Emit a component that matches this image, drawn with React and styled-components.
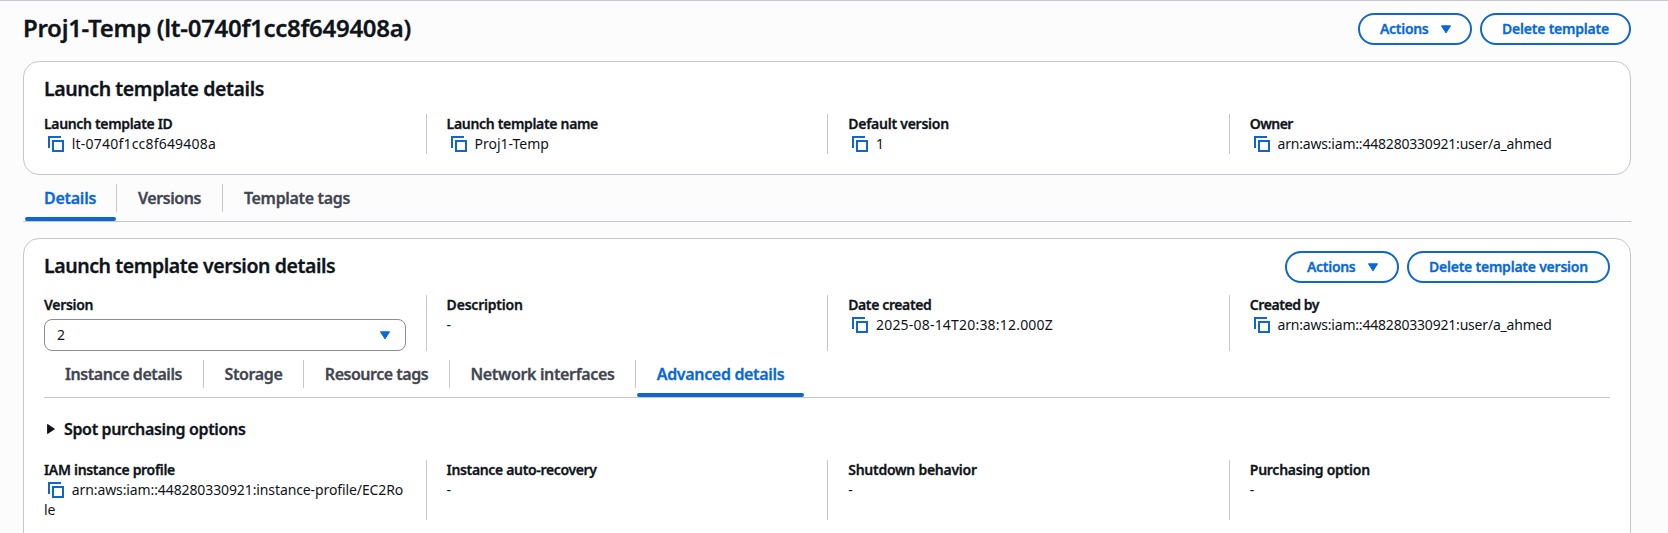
import React from "react";
import styled, { createGlobalStyle, css, ThemeProvider } from "styled-components";

const theme = {
  blue: "#0869d6",
  blueBar: "#0f67cc",
  text: "#0f141a",
  muted: "#424650",
  line: "#c6c6cd",
  page: "#fcfcfd",
};

const strong = css`
  font-weight: 600;
  -webkit-text-stroke: 0.3px currentColor;
`;

const GlobalStyle = createGlobalStyle`
  *, *::before, *::after { box-sizing: border-box; }
  body {
    margin: 0;
    overflow: hidden;
    background: ${theme.page};
    color: ${theme.text};
    font: 14px/20px "Noto Sans", "Open Sans", sans-serif;
  }
`;

const Page = styled.main`
  height: 533px;
  overflow: hidden;
  border-top: 1px solid ${(p) => p.theme.line};
  padding: 12px 37px 0 23px;
`;

const Header = styled.header`
  display: flex;
  justify-content: space-between;
  align-items: flex-start;
  height: 32px;
`;

const PageTitle = styled.h1`
  margin: 0;
  font-size: 24px;
  line-height: 30px;
  ${strong}
  letter-spacing: -0.29px;
`;

const SectionTitle = styled.h2`
  margin: 0;
  padding-top: ${(p) => p.$top || 0}px;
  font-size: 19.5px;
  line-height: 24px;
  ${strong}
  letter-spacing: ${(p) => p.$track}px;
`;

const Actions = styled.div`
  display: flex;
  gap: 8px;
`;

const Button = styled.button`
  display: flex;
  align-items: center;
  justify-content: space-between;
  width: ${(p) => p.$width}px;
  height: 32px;
  padding: 0 19px 0 20px;
  border: 2px solid ${(p) => p.theme.blueBar};
  border-radius: 16px;
  background: #fff;
  color: ${(p) => p.theme.blue};
  font: inherit;
  ${strong}
  letter-spacing: ${(p) => p.$track}px;
  white-space: nowrap;
`;

const Panel = styled.section`
  margin-top: 16px;
  padding: ${(p) => p.$top}px 20px 20px;
  border: 1px solid ${(p) => p.theme.line};
  border-radius: 16px;
  background: #fff;
`;

const VersionPanel = styled(Panel)`
  height: 340px;
`;

const Columns = styled.div`
  display: grid;
  grid-template-columns: repeat(4, 401.6px);
  height: ${(p) => p.$height}px;
  margin: ${(p) => p.$gap}px -20px 0;
`;

const Cell = styled.div`
  padding: 0 20px;
  white-space: nowrap;

  & + & {
    border-left: 1px solid ${(p) => p.theme.line};
  }
`;

const Label = styled.div`
  ${strong}
  letter-spacing: ${(p) => p.$track}px;
`;

const Value = styled.div`
  letter-spacing: ${(p) => p.$track || 0}px;
`;

const CopySvg = styled.svg`
  width: 16px;
  height: 16px;
  margin: 0 7.8px 0 4px;
  vertical-align: -3px;
`;

const Select = styled.div`
  display: flex;
  align-items: center;
  justify-content: space-between;
  width: 362px;
  height: 32px;
  margin-top: 4px;
  padding: 0 15px 0 12px;
  border: 1px solid #8c8c94;
  border-radius: 8px;
  background: #fff;
  color: ${(p) => p.theme.text};
`;

const TabBar = styled.nav`
  display: flex;
  height: 47px;
  padding: 9px 0 0 ${(p) => p.$inset || 0}px;
  border-bottom: 1px solid ${(p) => p.theme.line};
`;

const Tab = styled.div`
  position: relative;
  width: ${(p) => p.$width}px;
  height: 28px;
  line-height: 28px;
  text-align: center;
  font-size: 16px;
  ${strong}
  letter-spacing: ${(p) => p.$track}px;
  color: ${(p) => (p.$active ? p.theme.blue : p.theme.muted)};

  &:not(:last-child) {
    border-right: 1px solid ${(p) => p.theme.line};
  }

  &::after {
    content: "";
    display: ${(p) => (p.$active ? "block" : "none")};
    position: absolute;
    left: 1px;
    right: ${(p) => p.$barEnd || 0}px;
    bottom: -9px;
    height: 4px;
    border-radius: 2px;
    background: ${(p) => p.theme.blueBar};
  }
`;

const Expander = styled.div`
  display: flex;
  align-items: center;
  gap: 9px;
  margin-top: 21px;
  padding-left: 3px;
  font-size: 16px;
  ${strong}
  letter-spacing: -0.35px;
`;

const CopyIcon = () => (
  <CopySvg viewBox="0 0 16 16" fill="none" stroke={theme.blueBar} strokeWidth="2">
    <path d="M1 12V1H13" />
    <rect x="5" y="5" width="10" height="10" />
  </CopySvg>
);

const CaretDown = () => (
  <svg width="10" height="9" viewBox="0 0 10 9" fill={theme.blue} stroke={theme.blue} strokeLinejoin="round">
    <path d="M.5 .8h9L5 7.9z" />
  </svg>
);

const CaretRight = () => (
  <svg width="8" height="12" viewBox="0 0 8 12" fill={theme.text} stroke={theme.text} strokeLinejoin="round">
    <path d="M.6 1.5v9L7.4 6z" />
  </svg>
);

const Field = ({ label, track, value, valueTrack, copy, children }) => (
  <Cell>
    <Label $track={track}>{label}</Label>
    {children || (
      <Value $track={valueTrack}>
        {copy && <CopyIcon />}
        {value}
      </Value>
    )}
  </Cell>
);

const Tabs = ({ items, inset }) => (
  <TabBar $inset={inset}>
    {items.map((t) => (
      <Tab key={t.name} $width={t.width} $track={t.track} $active={t.active} $barEnd={t.barEnd}>
        {t.name}
      </Tab>
    ))}
  </TabBar>
);

const mainTabs = [
  { name: "Details", width: 93, track: -0.25, active: true },
  { name: "Versions", width: 106, track: -0.43 },
  { name: "Template tags", width: 148, track: -0.33 },
];

const versionTabs = [
  { name: "Instance details", width: 160, track: -0.42 },
  { name: "Storage", width: 100, track: -0.37 },
  { name: "Resource tags", width: 146, track: -0.48 },
  { name: "Network interfaces", width: 186, track: -0.35 },
  { name: "Advanced details", width: 169, track: -0.33, active: true, barEnd: 1 },
];

export default function App() {
  return (
    <ThemeProvider theme={theme}>
      <GlobalStyle />
      <Page>
        <Header>
          <PageTitle>Proj1-Temp (lt-0740f1cc8f649408a)</PageTitle>
          <Actions>
            <Button $width={114} $track={-0.3}>
              Actions <CaretDown />
            </Button>
            <Button $width={151} $track={-0.21}>Delete template</Button>
          </Actions>
        </Header>

        <Panel $top={15}>
          <SectionTitle $track={-0.41}>Launch template details</SectionTitle>
          <Columns $height={40} $gap={13}>
            <Field label="Launch template ID" track={-0.335} value="lt-0740f1cc8f649408a" valueTrack={0.2} copy />
            <Field label="Launch template name" track={-0.32} value="Proj1-Temp" valueTrack={0.02} copy />
            <Field label="Default version" track={-0.25} value="1" copy />
            <Field label="Owner" track={-0.55} value="arn:aws:iam::448280330921:user/a_ahmed" valueTrack={-0.2} copy />
          </Columns>
        </Panel>

        <Tabs items={mainTabs} inset={1} />

        <VersionPanel $top={12}>
          <Header>
            <SectionTitle $top={3} $track={-0.43}>Launch template version details</SectionTitle>
            <Actions>
              <Button $width={114} $track={-0.3}>
                Actions <CaretDown />
              </Button>
              <Button $width={203} $track={-0.23}>Delete template version</Button>
            </Actions>
          </Header>
          <Columns $height={56} $gap={12}>
            <Field label="Version" track={-0.3}>
              <Select>
                2 <CaretDown />
              </Select>
            </Field>
            <Field label="Description" track={-0.2} value="-" />
            <Field label="Date created" track={-0.38} value="2025-08-14T20:38:12.000Z" valueTrack={0.2} copy />
            <Field label="Created by" track={-0.43} value="arn:aws:iam::448280330921:user/a_ahmed" valueTrack={-0.2} copy />
          </Columns>
          <Tabs items={versionTabs} />
          <Expander>
            <CaretRight />
            Spot purchasing options
          </Expander>
          <Columns $height={60} $gap={21}>
            <Field
              label="IAM instance profile"
              track={-0.31}
              value={<>arn:aws:iam::448280330921:instance-profile/EC2Ro<br />le</>}
              valueTrack={-0.106}
              copy
            />
            <Field label="Instance auto-recovery" track={-0.34} value="-" />
            <Field label="Shutdown behavior" track={-0.26} value="-" />
            <Field label="Purchasing option" track={-0.25} value="-" />
          </Columns>
        </VersionPanel>
      </Page>
    </ThemeProvider>
  );
}
